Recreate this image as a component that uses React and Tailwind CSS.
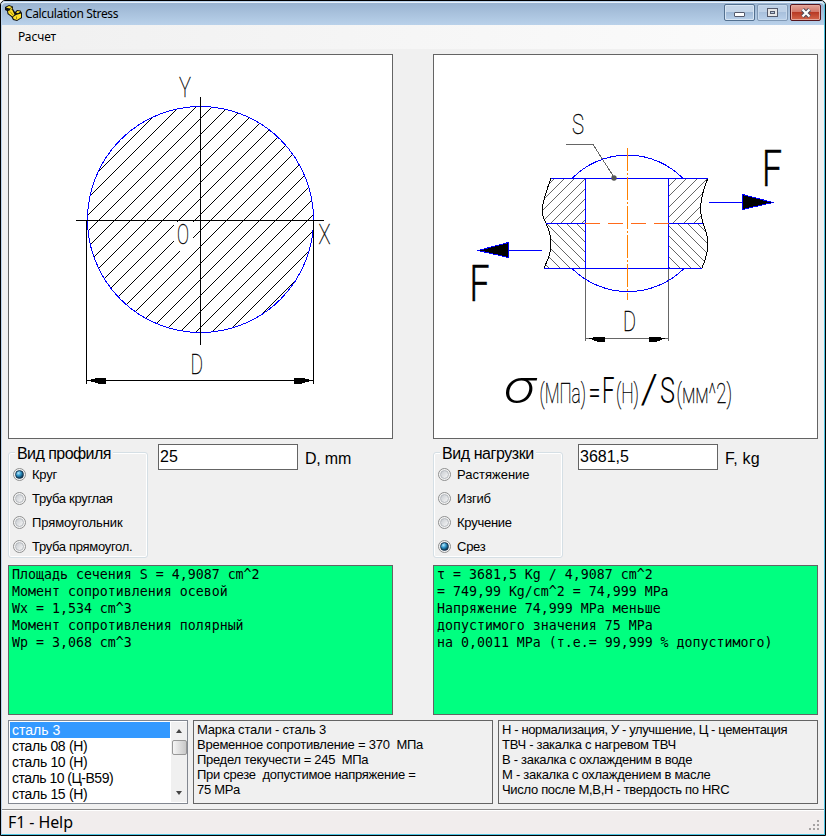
import React from "react";

const FONT = "font-['Liberation_Sans',Arial,sans-serif]";
const UI = "font-['Noto_Sans','Open_Sans',sans-serif]";

function Glyph({ x, y, w, size, weight = 100, family = "Roboto", children, ...rest }) {
  return (
    <text
      x={x}
      y={y}
      textLength={w}
      lengthAdjust="spacingAndGlyphs"
      fontFamily={`${family}, sans-serif`}
      fontWeight={weight}
      fontSize={size}
      fill="#000"
      stroke="#000"
      strokeWidth={weight === 100 ? 0.35 : 0}
      {...rest}
    >
      {children}
    </text>
  );
}

const FORMULA = [
  { t: "(МПа)", x: 539.5, w: 46.5, size: 27, weight: 100 },
  { t: "=", x: 588.5, w: 12, size: 32, weight: 300 },
  { t: "F", x: 602, w: 12.5, size: 37, weight: 300 },
  { t: "(Н)", x: 616, w: 23, size: 27, weight: 100 },
  { t: "/", x: 640.5, w: 17.5, size: 41, weight: 300 },
  { t: "S", x: 660, w: 15, size: 37, weight: 300 },
  { t: "(мм^2)", x: 676.5, w: 55.5, size: 27, weight: 100 },
];

function ProfileDrawing() {
  const hatch = Array.from({ length: 20 }, (_, i) => Math.round(270.3 + i * 16.1));
  return (
    <svg className="block" width="383" height="383" viewBox="9 55 383 383">
      <clipPath id="disc">
        <circle cx="200.5" cy="219.5" r="113" />
      </clipPath>
      <g shapeRendering="crispEdges">
        <g clipPath="url(#disc)" stroke="#000">
          {hatch.map((c) => (
            <line key={c} x1={c - 340} y1="340" x2={c - 100} y2="100" />
          ))}
        </g>
        <rect x="174" y="222" width="19" height="29" fill="#fff" />
        <circle cx="200.5" cy="219.5" r="113" fill="none" stroke="#0000ff" />
        <path d="M200.5 97V345M76 220.5H324M86.5 220V384M313.5 220V384M86 380.5H314" stroke="#000" fill="none" />
        <path d="M88 380.5L98 377.5H106V383.5H98ZM312 380.5L302 377.5H294V383.5H302Z" fill="#000" />
      </g>
      <Glyph x="179" y="97" w="12" size="28">Y</Glyph>
      <Glyph x="318.5" y="244" w="12" size="28">X</Glyph>
      <Glyph x="177" y="244" w="12" size="28">O</Glyph>
      <Glyph x="190.5" y="374" w="12.5" size="28">D</Glyph>
    </svg>
  );
}

function LoadDrawing() {
  const steps = Array.from({ length: 18 }, (_, i) => Math.round(i * 10.3));
  const left = "M551 178C546 192 542 203 542 211C542 216 544 219 546 223L549 231C552 240 551 252 548 259L544 268";
  const right = "M708 178C703 190 701 200 700.5 207C700.5 215 702 219 703 223C706 231 708 238 708 243C708 253 705 261 702 268";
  return (
    <svg className="block" width="383" height="383" viewBox="434 55 383 383">
      <clipPath id="tl">
        <path d="M551 178C546 192 542 203 542 211C542 216 544 219 546 223H585V178Z" />
      </clipPath>
      <clipPath id="bl">
        <path d="M546 223L549 231C552 240 551 252 548 259L544 268H585V223Z" />
      </clipPath>
      <clipPath id="tr">
        <path d="M708 178C703 190 701 200 700.5 207C700.5 215 702 219 703 223H669V178Z" />
      </clipPath>
      <clipPath id="br">
        <path d="M703 223C706 231 708 238 708 243C708 253 705 261 702 268H669V223Z" />
      </clipPath>
      <g shapeRendering="crispEdges" fill="none">
        <g stroke="#666">
          <g clipPath="url(#tl)">
            {steps.map((s) => <line key={s} x1={484 + s} y1="228" x2={534 + s} y2="178" />)}
          </g>
          <g clipPath="url(#bl)">
            {steps.map((s) => <line key={s} x1={494 + s} y1="223" x2={544 + s} y2="273" />)}
          </g>
          <g clipPath="url(#tr)">
            {steps.map((s) => <line key={s} x1={627 + s} y1="228" x2={677 + s} y2="178" />)}
          </g>
          <g clipPath="url(#br)">
            {steps.map((s) => <line key={s} x1={625 + s} y1="223" x2={675 + s} y2="273" />)}
          </g>
          <path d="M566 144.5H593L614.5 178M585.5 268V341M668.5 268V341M585 338.5H669" />
        </g>
        <path d={left} stroke="#000" />
        <path d={right} stroke="#000" />
        <path
          d="M551 178.5H708M544 268.5H702M546 223.5H585M669 223.5H703M585.5 178V268M668.5 178V268M572 178.5A77.500 77.500 0 0 1 683 178.5M572 268.5A79.500 79.500 0 0 0 684 268.5M709 202.5H774M477 250.5H542"
          stroke="#0000ff"
        />
        <path d="M627.5 148V300" stroke="#ff8000" strokeDasharray="23 2 2 2" />
        <path d="M585 223.5H669" stroke="#ff6a1a" strokeDasharray="15 8" />
        <path d="M742.5 194.5V209.5L773 202.5ZM508.5 242.5V257.5L478 250.5Z" fill="#000" stroke="#0000ff" />
        <path d="M589 338.5L597 336.500H605V341.5H597ZM665 338.5L657 336.500H649V341.5H657Z" fill="#000" />
      </g>
      <circle cx="614" cy="178" r="2.700" fill="#555" />
      <Glyph x="572" y="134" w="12" size="28">S</Glyph>
      <Glyph x="762" y="185.500" w="20" size="50" weight={300} strokeWidth="0.5">F</Glyph>
      <Glyph x="469.500" y="300.500" w="20" size="50" weight={300} strokeWidth="0.5">F</Glyph>
      <Glyph x="623" y="331" w="13" size="28">D</Glyph>
      <Glyph x="504" y="402.500" w="31" size="46" weight={300} fontStyle="italic">σ</Glyph>
      <text y="402.500" fontFamily="Roboto, sans-serif" fill="#000" stroke="#000">
        {FORMULA.map((f) => (
          <tspan
            key={f.t}
            x={f.x}
            textLength={f.w}
            lengthAdjust="spacingAndGlyphs"
            fontSize={f.size}
            fontWeight={f.weight}
            strokeWidth={f.weight === 100 ? 0.35 : 0}
          >
            {f.t}
          </tspan>
        ))}
      </text>
    </svg>
  );
}

function Radio({ label, checked, cls }) {
  return (
    <label className="flex h-6 items-center">
      <span className="flex h-[13px] w-[13px] items-center justify-center rounded-full border border-[#8e8f8f] bg-[#f4f4f4]">
        <span
          className={
            checked
              ? "h-[9px] w-[9px] rounded-full border border-[#17354f] bg-[radial-gradient(circle_at_35%_30%,#b8ecff_0,#2a8fc4_40%,#0b3049_80%)]"
              : "h-[9px] w-[9px] rounded-full border border-[#b4b8bd] bg-[linear-gradient(135deg,#c8ccd1,#f6f6f6)]"
          }
        />
      </span>
      <span className={"ml-1.5 whitespace-nowrap pt-[2px] text-[13px] leading-4 " + cls}>{label}</span>
    </label>
  );
}

function Group({ title, titleCls, width, items }) {
  return (
    <div className={"relative h-[114px] pl-[5px] pt-[18px] " + width}>
      <div className="absolute inset-x-0 bottom-0 top-2 rounded-[3px] border border-[#d5dfe5] shadow-[inset_0_0_0_1px_#fff]" />
      <div className={"absolute left-[7px] top-0 whitespace-nowrap bg-[#f0f0f0] px-[2px] text-[16px] leading-[19px] " + titleCls}>{title}</div>
      <div className="relative">
        {items.map((it) => (
          <Radio key={it.label} {...it} />
        ))}
      </div>
    </div>
  );
}

function Side({ drawing, group, value, unit, unitCls, gap, lines }) {
  return (
    <div className="w-[385px]">
      <div className="h-[385px] border border-[#646464] bg-white">{drawing}</div>
      <div className="flex h-[126px] items-start pt-[5px]">
        {group}
        <div className={"h-[26px] w-[140px] whitespace-nowrap border border-[#646464] bg-white pl-px text-[16px] leading-[23px] " + gap}>
          {value}
        </div>
        <div className={"ml-[7px] mt-[5px] whitespace-nowrap text-[16px] leading-[19px] " + unitCls}>{unit}</div>
      </div>
      <div className="h-[150px] border border-[#646464] bg-[#00ff80] pl-[3px] font-['DejaVu_Sans_Mono',monospace] text-[13.28px] leading-[17px]">
        {lines.map((l) => (
          <div key={l} className="whitespace-pre">{l}</div>
        ))}
      </div>
    </div>
  );
}

const STEELS = [
  { name: "сталь 3", cls: "" },
  { name: "сталь 08 (Н)", cls: "tracking-[-0.33px]" },
  { name: "сталь 10 (Н)", cls: "tracking-[-0.33px]" },
  { name: "сталь 10 (Ц-В59)", cls: "tracking-[-0.5px]" },
  { name: "сталь 15 (Н)", cls: "tracking-[-0.33px]" },
];

export default function App() {
  return (
    <div className={"flex h-[836px] w-[826px] flex-col overflow-hidden rounded-t-[5px] border border-black bg-[#f0f0f0] text-black " + FONT}>
      <div className="flex flex-1 flex-col rounded-t-[4px] border border-[#b9d1ea] border-b-[#4fc3e0] border-r-[#4fc3e0]">
        <header className="flex h-[23px] shrink-0 items-start rounded-t-[4px] border-t border-[#e8f1fa] bg-linear-to-b from-[#9ab4d1] to-[#b9d1ea] pl-[3px] pr-[3px]">
          <svg width="17" height="17" viewBox="0 0 17 17" className="mt-[2px]">
            <path d="M0 2L4 0L8 1.500V4L10 7L12 5L15.500 5.500L17 8V13L12 16L8 15L6.500 12L2.500 9L2 6L0 5Z" fill="#111" />
            <path d="M1 2.500L4 1L7 2L4.500 3.500ZM3 6L7 4.500L9.500 9.500L7.500 11.500L3.500 8.500ZM5 3.800L7.200 2.800V4L5 5ZM8 12L11 10L16 8.500V12.500L12 15L8.700 14ZM11 7.500L12.500 6L15.500 6.500L13 8.300Z" fill="#ffe02a" />
            <path d="M5 6.500L8 10M11.500 11.500V14" stroke="#8a7200" strokeWidth="0.8" />
          </svg>
          <span className={"ml-[3px] mt-[2px] text-[12px] leading-[17px] tracking-[-0.36px] " + UI}>Calculation Stress</span>
          <div className="ml-auto mt-px flex gap-[2px]">
            <span className="flex h-[17px] w-[31px] items-center justify-center rounded-[2px] border border-[#53708f] bg-[linear-gradient(#c4d5e8_45%,#9fb9d6_50%,#b9d0ea)] shadow-[inset_0_0_0_1px_#d7e5f3]">
              <span className="mt-1 h-[5px] w-[11px] rounded-[1px] border border-[#53596b] bg-white" />
            </span>
            <span className="flex h-[17px] w-[31px] items-center justify-center rounded-[2px] border border-[#8099b5] bg-[linear-gradient(#bdd0e6_45%,#a8c0dc_50%,#b9d0ea)] shadow-[inset_0_0_0_1px_#c7d9ec]">
              <span className="flex h-[9px] w-[11px] items-center justify-center border border-[#53596b] bg-[#e6e6e6]">
                <span className="h-[3px] w-[5px] border border-[#53596b] bg-[#b9c9dc]" />
              </span>
            </span>
            <span className="flex h-[17px] w-[31px] items-center justify-center rounded-[2px] border border-[#55141c] bg-[linear-gradient(#e3a396_0,#d2786a_45%,#b83a25_50%,#d4674c)] shadow-[inset_0_0_0_1px_#e5a79b]">
              <svg width="12" height="10" viewBox="0 0 12 10">
                <path d="M2.500 1.500L9.500 8.500M9.500 1.500L2.500 8.500" stroke="#4c4c5c" strokeWidth="4.200" />
                <path d="M2.500 1.500L9.500 8.500M9.500 1.500L2.500 8.500" stroke="#fff" strokeWidth="2.200" />
              </svg>
            </span>
          </div>
        </header>
        <nav className={"h-[24px] shrink-0 bg-linear-to-r from-[#f0f0f0] to-[#fcfcfc] pl-4 text-[12px] leading-[23px] tracking-[-0.1px] " + UI}>Расчет</nav>

        <main className="shrink-0 px-[6px] pt-[5px]">
          <div className="flex gap-10">
            <Side
              drawing={<ProfileDrawing />}
              group={
                <Group
                  title="Вид профиля"
                  titleCls="tracking-[-0.55px]"
                  width="w-[140px]"
                  items={[
                    { label: "Круг", checked: true, cls: "tracking-[-0.25px]" },
                    { label: "Труба круглая", cls: "tracking-[-0.31px]" },
                    { label: "Прямоугольник", cls: "tracking-[-0.1px]" },
                    { label: "Труба прямоугол.", cls: "tracking-[-0.31px]" },
                  ]}
                />
              }
              value="25"
              gap="ml-[10px]"
              unit="D, mm"
              unitCls="tracking-[-0.2px]"
              lines={["Площадь сечения S = 4,9087 cm^2", "Момент сопротивления осевой", "Wx = 1,534 cm^3", "Момент сопротивления полярный", "Wp = 3,068 cm^3"]}
            />
            <Side
              drawing={<LoadDrawing />}
              group={
                <Group
                  title="Вид нагрузки"
                  titleCls="tracking-[-0.43px]"
                  width="w-[130px]"
                  items={[
                    { label: "Растяжение", cls: "" },
                    { label: "Изгиб", cls: "tracking-[-0.2px]" },
                    { label: "Кручение", cls: "tracking-[-0.25px]" },
                    { label: "Срез", checked: true, cls: "tracking-[-0.25px]" },
                  ]}
                />
              }
              value="3681,5"
              gap="ml-[15px]"
              unit="F, kg"
              unitCls="tracking-[0.2px]"
              lines={["τ = 3681,5 Kg / 4,9087 cm^2", "= 749,99 Kg/cm^2 = 74,999 MPa", "Напряжение 74,999 MPa меньше", "допустимого значения 75 MPa", "на 0,0011 MPa (т.е.= 99,999 % допустимого)"]}
            />
          </div>

          <div className="mt-[5px] flex h-[84px] gap-[5px] text-[13px]">
            <div className="flex w-[180px] border border-[#828790] bg-white p-px">
              <ul className="flex-1 text-[14px] leading-4">
                {STEELS.map((s, i) => (
                  <li key={s.name} className={(i === 0 ? "h-4 bg-[#3399ff] pl-[2px] text-white " : "h-4 pl-[2px] ") + s.cls}>{s.name}</li>
                ))}
              </ul>
              <div className="ml-px flex w-4 -mr-px flex-col items-center bg-[#f0f0f0]">
                <span className="mt-[7px] h-0 w-0 border-x-[3.5px] border-b-[4px] border-x-transparent border-b-[#444]" />
                <span className="mt-[7px] h-[15px] w-[15px] rounded-[2px] border border-[#979797] bg-linear-to-r from-[#f5f5f5] to-[#c8c8c8]" />
                <span className="mb-[7px] mt-auto h-0 w-0 border-x-[3.5px] border-t-[4px] border-x-transparent border-t-[#444]" />
              </div>
            </div>
            <div className="w-[300px] border border-[#646464] pl-[3px] pt-px leading-[15px]">
              <div className="whitespace-pre tracking-[-0.19px]">Марка стали - сталь 3</div>
              <div className="whitespace-pre tracking-[-0.24px]">Временное сопротивление = 370  МПа</div>
              <div className="whitespace-pre tracking-[-0.3px]">Предел текучести = 245  МПа</div>
              <div className="whitespace-pre tracking-[-0.27px]">При срезе  допустимое напряжение =</div>
              <div className="whitespace-pre tracking-[-0.3px]">75 MPa</div>
            </div>
            <div className="w-[320px] border border-[#646464] pl-[3px] pt-px leading-[15px]">
              <div className="whitespace-pre tracking-[-0.38px]">Н - нормализация, У - улучшение, Ц - цементация</div>
              <div className="whitespace-pre tracking-[-0.29px]">ТВЧ - закалка с нагревом ТВЧ</div>
              <div className="whitespace-pre tracking-[-0.29px]">В - закалка с охлажденим в воде</div>
              <div className="whitespace-pre tracking-[-0.27px]">М - закалка с охлаждением в масле</div>
              <div className="whitespace-pre tracking-[-0.31px]">Число после М,В,Н - твердость по HRC</div>
            </div>
          </div>
        </main>
        <footer className={"mt-[5px] flex flex-1 items-end justify-between border-t border-[#8c8c8c] bg-[#f1eded] shadow-[inset_0_1px_0_#fff] " + UI}>
          <span className="pl-[6px] text-[16px] leading-[23px] tracking-[-0.1px]">F1 - Help</span>
          <svg width="12" height="12" viewBox="0 0 12 12" className="mb-[2px] mr-[3px]" fill="#a5a2a2">
            <path d="M8 0h2v2h-2zM4 4h2v2h-2zM8 4h2v2h-2zM0 8h2v2h-2zM4 8h2v2h-2zM8 8h2v2h-2z" />
          </svg>
        </footer>
      </div>
    </div>
  );
}
